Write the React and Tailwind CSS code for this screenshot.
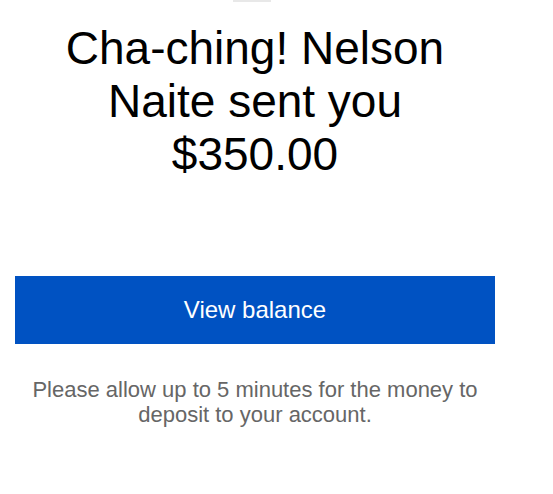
import React from "react";

export default function App() {
    return (
        <div
            className="min-h-screen bg-white"
            style={{ fontFamily: '"Liberation Sans", Arial, sans-serif' }}
        >
            <div className="w-[510px] px-[15px] flex flex-col">
                {/* image edge peeking at top */}
                <div className="mx-auto -translate-x-[3px] h-[2px] w-[38px] bg-[#e8e8e8]" />

                <h1 className="mt-[20px] px-[30px] text-center text-[46px] leading-[1.15] text-black font-normal">
                    Cha-ching! Nelson Naite sent you $350.00
                </h1>

                <button className="mt-[95px] h-[68px] w-full bg-[#0052c2] text-white text-[24px] leading-none">
                    View balance
                </button>

                <p className="mt-[33px] text-center text-[22px] leading-[1.15] text-[#666666]">
                    Please allow up to 5 minutes for the money to deposit to
                    your account.
                </p>
            </div>
        </div>
    );
}
